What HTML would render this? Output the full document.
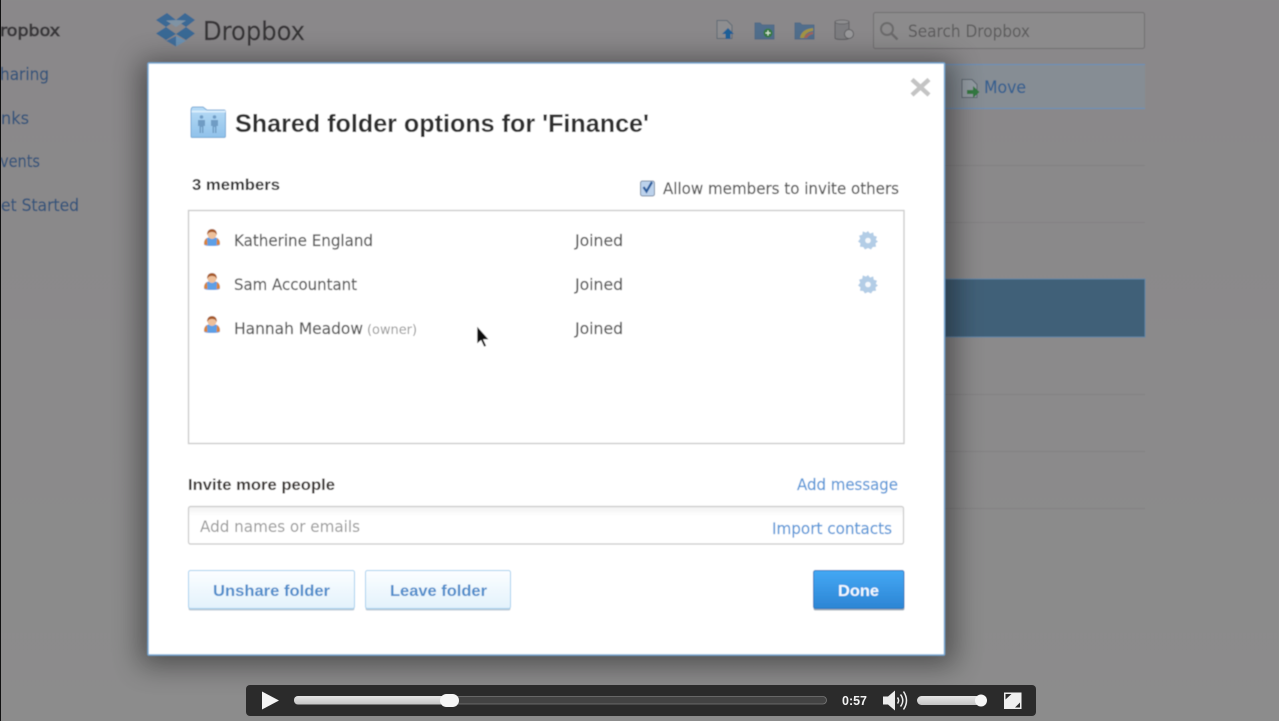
<!DOCTYPE html>
<html><head><meta charset="utf-8"><style>
html,body{margin:0;padding:0;width:1279px;height:721px;overflow:hidden;background:#8c8b8c}
svg{display:block}
text{font-family:"DejaVu Sans","Liberation Sans",sans-serif}
text.h{font-family:"Liberation Sans",sans-serif;font-weight:bold}
.b{stroke-width:.8px}
.r{stroke-width:.2px}
</style></head><body>
<svg width="1279" height="721" viewBox="0 0 1279 721" xmlns="http://www.w3.org/2000/svg">
<defs>
<linearGradient id="bg" x1="0" y1="0" x2="0" y2="1"><stop offset="0" stop-color="#8a888a"/><stop offset="1" stop-color="#8c8c8c"/></linearGradient>
<linearGradient id="btn" x1="0" y1="0" x2="0" y2="1"><stop offset="0" stop-color="#fcfeff"/><stop offset="1" stop-color="#e3f2fc"/></linearGradient>
<linearGradient id="done" x1="0" y1="0" x2="0" y2="1"><stop offset="0" stop-color="#44a8f4"/><stop offset="1" stop-color="#2c85d4"/></linearGradient>
<linearGradient id="folder" x1="0" y1="0" x2="0" y2="1"><stop offset="0" stop-color="#b8dcf6"/><stop offset="1" stop-color="#8fc1ea"/></linearGradient>
<linearGradient id="track" x1="0" y1="0" x2="0" y2="1"><stop offset="0" stop-color="#e6e6e6"/><stop offset="1" stop-color="#c4c4c4"/></linearGradient>
<linearGradient id="inp" x1="0" y1="0" x2="0" y2="1"><stop offset="0" stop-color="#f1f1f1"/><stop offset=".25" stop-color="#fff"/></linearGradient>
<filter id="sh" x="-10%" y="-10%" width="120%" height="120%"><feGaussianBlur stdDeviation="14"/></filter>
<filter id="soft" x="-2%" y="-2%" width="104%" height="104%"><feGaussianBlur stdDeviation=".45"/></filter>
<g id="user">
<path d="M-8 13c0-5 3-7 8-7s8 2 8 7c0 1.500-2 2-8 2s-8-.5-8-2z" fill="#5d9fe6"/>
<path d="M-8 13c0-3 1-5 3-6l.5 7c-2 0-3.500-.2-3.500-1zM8 13c0-3-1-5-3-6l-.5 7c2 0 3.500-.2 3.500-1z" fill="#d9843a"/>
<circle cx="0" cy="3.500" r="4.500" fill="#eec09a"/>
<path d="M-4.800 4c-.5-4 2-6 4.800-6s5.300 2 4.800 6c-1-2-2-3-4.800-3s-3.800 1-4.800 3z" fill="#a65a2c"/>
</g>
<g id="gear">
<path d="M0-9l2 2.600 3.200-1.200.6 3.300 3.200.9-1.200 3.200L10 1.500 7.500 3.400l.6 3.300-3.300.3L3 9.500 0 8l-3 1.500L-4.800 7l-3.300-.3.600-3.300L-10 1.500l2.200-2.700L-9-4.400l3.200-.9.600-3.300L-2-7.400z" fill="#b3cde6" transform="translate(0 -.5)"/>
<circle r="2.800" fill="#f4f8fc"/>
</g>
</defs>

<g filter="url(#soft)">
<rect width="1279" height="721" fill="url(#bg)"/>

<!-- background app -->
<g stroke="#828182" stroke-width="1">
<path d="M945 165.500H1145M945 222.500H1145M945 394.500H1145M945 451.500H1145M945 508.500H1145"/>
</g>
<rect x="945" y="279" width="200" height="58" fill="#416078"/>
<rect x="945" y="279" width="200" height="58" fill="none" stroke="#5f85a6" stroke-width="1"/>
<rect x="945" y="64" width="200" height="45" fill="#868d94"/>
<path d="M945 64.500H1145M945 108.500H1145" stroke="#6590bc" stroke-width="1"/>

<text x="0" y="36" font-size="16" class="b" stroke="#3a383b" fill="#3a383b" textLength="60" lengthAdjust="spacingAndGlyphs">ropbox</text>
<g fill="#36557a" stroke="#36557a" font-size="17" class="r">
<text x="0" y="80" textLength="49" lengthAdjust="spacingAndGlyphs">haring</text>
<text x="1" y="124" textLength="28" lengthAdjust="spacingAndGlyphs">nks</text>
<text x="0" y="167" textLength="40" lengthAdjust="spacingAndGlyphs">vents</text>
<text x="1" y="211" textLength="78" lengthAdjust="spacingAndGlyphs">et Started</text>
</g>

<!-- dropbox logo -->
<path d="M167 13l9 7-10 7-10-7zM185 13l10 7-9 7-10-7zM166 27l10 7-10 6-10-6.500zM186 27l9 6.500-9 6.500-10-6z" fill="#3a6995"/>
<path d="M166 20.500l10-.5 10 .5-10 6.500z" fill="#7f93a4"/>
<path d="M163 39l13 7.500V36l-10 5z" fill="#416f9c"/>
<path d="M189 39l-13 7.500V36l10 5z" fill="#6b93b5"/>
<text x="203" y="40" font-size="26" fill="#373537" stroke="#373537" class="r" textLength="102" lengthAdjust="spacingAndGlyphs">Dropbox</text>

<!-- toolbar icons -->
<path d="M717 20.500h10l5 5v13h-15z" fill="#8e8e90" stroke="#5f6b75" stroke-width="1"/>
<path d="M728 28l6 6h-3.500v5h-5v-5H722z" fill="#1f6098"/>
<path d="M755 23h5l2 2h12v14h-19z" fill="#516e8c" stroke="#4f6b86"/>
<circle cx="768" cy="33" r="4.500" fill="#357a42"/><path d="M765.500 33h5M768 30.500v5" stroke="#d8e8d8" stroke-width="1.200"/>
<path d="M795 23h5l2 2h12v14h-19z" fill="#516e8c" stroke="#4f6b86"/>
<path d="M800 38c1-6 5-9 13-10v3c-5 .5-8 3-9 7z" fill="#a39444"/><path d="M804 38c1-3 4-5 9-6v2c-3 .5-5 2-6 4z" fill="#a86254"/>
<path d="M835 22c0-2 14-2 14 0v16c0 2-14 2-14 0z" fill="#7d7d80" stroke="#5d5d60"/>
<ellipse cx="842" cy="22" rx="7" ry="2" fill="#8e8e90" stroke="#5d5d60" stroke-width=".7"/>
<circle cx="849" cy="34" r="4.500" fill="#99999b" stroke="#5d5d60"/>
<path d="M962 79.500h10l5 5v13h-15z" fill="#949ca3" stroke="#5c6670"/>
<path d="M967 90h6v-4l6.500 6-6.500 6v-4h-6z" fill="#357a42"/>
<rect x="873.500" y="12.500" width="271" height="36" rx="2" fill="#8c8b8c" stroke="#706e70"/>
<circle cx="887" cy="29" r="6" fill="none" stroke="#6b6a6b" stroke-width="2"/>
<path d="M891.500 33.500l6 6" stroke="#6b6a6b" stroke-width="2.500"/>
<text x="908" y="37" font-size="17" fill="#5c5b5c" textLength="122" lengthAdjust="spacingAndGlyphs">Search Dropbox</text>
<text x="984" y="93" font-size="17" fill="#36608f" stroke="#36608f" class="r" textLength="42" lengthAdjust="spacingAndGlyphs">Move</text>

<!-- modal -->
<rect x="140" y="60" width="815" height="606" fill="#000" opacity=".42" filter="url(#sh)"/>
<rect x="148" y="63" width="796.500" height="592" rx="1" fill="#fff" stroke="#76a8d4" stroke-width="1.500"/>

<path d="M912 79.500l17 15.500M929 79.500l-17 15.500" stroke="#c4c4c4" stroke-width="4.500"/>

<!-- folder icon -->
<path d="M191 136v-26c0-1.500 1-3 2-3h10l4 3h17c1 0 1.500 1 1.500 2v24c0 1-.5 1.500-1.500 1.500h-32c-.5 0-1-.5-1-1.500z" fill="url(#folder)" stroke="#75a9d6"/>
<rect x="191.500" y="110.500" width="34" height="2" fill="#d9edfb"/>
<g fill="#6f9cc4">
<circle cx="201.500" cy="117" r="1.800"/><path d="M198 120h7v6h-1.500v7h-1.500v-6h-1v6h-1.500v-7H198z"/>
<circle cx="214.500" cy="117" r="1.800"/><path d="M211 120h7v6h-1.500v7h-1.500v-6h-1v6h-1.500v-7H211z"/>
</g>

<text x="235" y="132" font-size="25" class="h" fill="#2e2e2e" textLength="414" lengthAdjust="spacingAndGlyphs">Shared folder options for 'Finance'</text>
<text x="192" y="190" font-size="15.500" class="h" fill="#333" textLength="88" lengthAdjust="spacingAndGlyphs">3 members</text>

<!-- checkbox -->
<rect x="640.500" y="181" width="14" height="15" rx="2" fill="#bcd2ec" stroke="#7d8ea6"/>
<path d="M643.500 187l3 4.500 5.500-9.500" fill="none" stroke="#2c5f9e" stroke-width="2.300"/>
<text x="663" y="194" font-size="16" fill="#5a5a5a" stroke="#5a5a5a" class="r" textLength="236" lengthAdjust="spacingAndGlyphs">Allow members to invite others</text>

<!-- members list -->
<rect x="188.500" y="210.500" width="715.500" height="233" fill="#fff" stroke="#c9c9c9" stroke-width="1.300"/>
<use href="#user" x="212" y="231"/>
<use href="#user" x="212" y="275"/>
<use href="#user" x="212" y="318"/>
<g font-size="16" fill="#595959" stroke="#595959" class="r">
<text x="234" y="246" textLength="139" lengthAdjust="spacingAndGlyphs">Katherine England</text>
<text x="234" y="290" textLength="123" lengthAdjust="spacingAndGlyphs">Sam Accountant</text>
<text x="234" y="334" textLength="129" lengthAdjust="spacingAndGlyphs">Hannah Meadow</text>
<text x="575" y="246" textLength="48" lengthAdjust="spacingAndGlyphs">Joined</text>
<text x="575" y="290" textLength="48" lengthAdjust="spacingAndGlyphs">Joined</text>
<text x="575" y="334" textLength="48" lengthAdjust="spacingAndGlyphs">Joined</text>
</g>
<text x="367" y="334" font-size="13.500" fill="#999" textLength="50" lengthAdjust="spacingAndGlyphs">(owner)</text>
<use href="#gear" x="868" y="240.500"/>
<use href="#gear" x="868" y="284.500"/>

<!-- cursor -->
<path d="M477 326v18l4-3.500 3 6.500 2.500-1-3-6.500h5.500z" fill="#111" stroke="#fff" stroke-width=".6"/>

<!-- invite -->
<text x="188" y="490" font-size="16" class="h" fill="#3a3532" textLength="147" lengthAdjust="spacingAndGlyphs">Invite more people</text>
<text x="797" y="490" font-size="16" fill="#5d9ad8" stroke="#5d9ad8" class="r" textLength="101" lengthAdjust="spacingAndGlyphs">Add message</text>
<rect x="188.500" y="506.500" width="715" height="37.500" rx="2" fill="url(#inp)" stroke="#c9c9c9" stroke-width="1.200"/>
<text x="200" y="532" font-size="16" fill="#999" textLength="160" lengthAdjust="spacingAndGlyphs">Add names or emails</text>
<text x="772" y="534" font-size="16" fill="#5d9ad8" stroke="#5d9ad8" class="r" textLength="120" lengthAdjust="spacingAndGlyphs">Import contacts</text>

<!-- buttons -->
<rect x="188.500" y="571.500" width="166" height="39" rx="2" fill="#9fb4c4" opacity=".7"/>
<rect x="188.500" y="570.500" width="166" height="38" rx="2" fill="url(#btn)" stroke="#a5d0ee"/>
<rect x="365.500" y="571.500" width="145" height="39" rx="2" fill="#9fb4c4" opacity=".7"/>
<rect x="365.500" y="570.500" width="145" height="38" rx="2" fill="url(#btn)" stroke="#a5d0ee"/>
<rect x="813.500" y="571.500" width="91" height="39" rx="2" fill="#8b9aa6" opacity=".8"/>
<rect x="813.500" y="570.500" width="90.500" height="38" rx="2" fill="url(#done)" stroke="#2a78bd"/>
<g font-size="16">
<text x="213" y="596" class="h" fill="#4f8dcb" textLength="117" lengthAdjust="spacingAndGlyphs">Unshare folder</text>
<text x="390" y="596" class="h" fill="#4f8dcb" textLength="97" lengthAdjust="spacingAndGlyphs">Leave folder</text>
<text x="838" y="596" class="h" fill="#f4f9fe" textLength="41" lengthAdjust="spacingAndGlyphs">Done</text>
</g>
</g>

<rect x="0" y="0" width="1" height="721" fill="#111"/>

<!-- video player -->
<rect x="246" y="685" width="790" height="31" rx="4" fill="#2b2b2b"/>
<path d="M262 691.500v18l17-9z" fill="#f4f4f4"/>
<rect x="294.500" y="696.500" width="532" height="7.500" rx="3.700" fill="#434343" stroke="#7a7a7a" stroke-width=".8"/>
<rect x="294" y="696" width="152" height="8.500" rx="4" fill="url(#track)"/>
<rect x="440" y="694" width="19" height="13" rx="6.500" fill="#f6f6f6"/>
<text x="842" y="705" font-size="13" class="h" fill="#f2f2f2" textLength="25" lengthAdjust="spacingAndGlyphs">0:57</text>
<path d="M883 696.500h5l7-6v20l-7-6h-5z" fill="#ececec"/>
<path d="M897.500 697.500c1.500 2 1.500 4 0 6M900.500 694.500c3 4 3 8 0 12M903.500 691.500c4 6 4 12 0 18" fill="none" stroke="#ececec" stroke-width="1.500"/>
<rect x="917" y="696" width="64" height="9" rx="4.500" fill="url(#track)"/>
<circle cx="981" cy="700.500" r="6" fill="#f6f6f6"/>
<rect x="1004" y="692.500" width="17.500" height="16.500" fill="#f0f0f0"/>
<path d="M1005.500 694h6l-6 5.500zM1020 707.500h-5l5-5z" fill="#2b2b2b"/>
</svg>
</body></html>
